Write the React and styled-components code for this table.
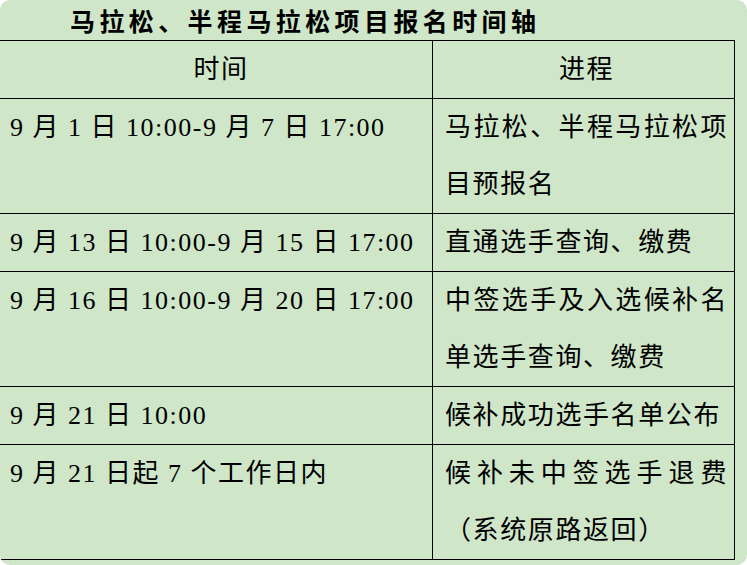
import React from "react";
import styled, { createGlobalStyle } from "styled-components";

const GlobalStyle = createGlobalStyle`
  html, body {
    margin: 0;
    padding: 0;
    background: #ffffff;
  }
`;

const Card = styled.div`
  width: 747px;
  height: 565px;
  box-sizing: border-box;
  background: #cfe6c9;
  border-radius: 10px;
  overflow: hidden;
  font-family: "Liberation Serif", "Noto Sans CJK SC", serif;
  color: #000;
`;

const Title = styled.h1`
  margin: 0;
  height: 40px;
  line-height: 40px;
  padding-left: 70px;
  font-family: "Noto Sans CJK SC", sans-serif;
  font-size: 25px;
  font-weight: 700;
  letter-spacing: 4.4px;
`;

const Grid = styled.div`
  display: grid;
  grid-template-columns: 433px 302px;
  border-bottom: 1.5px solid #000;
  width: 735px;
`;

const Cell = styled.div`
  box-sizing: border-box;
  border-top: 1.5px solid #000;
  border-right: 1.5px solid #000;
  line-height: 57px;
  font-size: 26px;
  letter-spacing: ${(p) => (p.$wide ? "1.5px" : "1.6px")};
  padding: ${(p) => (p.$right ? "0 6px 0 12px" : "0 0 0 10px")};
  text-align: ${(p) => (p.$center ? "center" : "justify")};
  min-height: 58px;
`;

const rows = [
  ["9 月 1 日 10:00-9 月 7 日 17:00", "马拉松、半程马拉松项目预报名"],
  ["9 月 13 日 10:00-9 月 15 日 17:00", "直通选手查询、缴费"],
  ["9 月 16 日 10:00-9 月 20 日 17:00", "中签选手及入选候补名单选手查询、缴费"],
  ["9 月 21 日 10:00", "候补成功选手名单公布"],
  ["9 月 21 日起 7 个工作日内", "候补未中签选手退费（系统原路返回）"],
];

export default function App() {
  return (
    <>
      <GlobalStyle />
      <Card>
        <Title>马拉松、半程马拉松项目报名时间轴</Title>
        <Grid>
          <Cell $center>时间</Cell>
          <Cell $center $right>
            进程
          </Cell>
          {rows.map(([time, step]) => (
            <React.Fragment key={time}>
              <Cell $wide>{time}</Cell>
              <Cell $right>{step}</Cell>
            </React.Fragment>
          ))}
        </Grid>
      </Card>
    </>
  );
}
